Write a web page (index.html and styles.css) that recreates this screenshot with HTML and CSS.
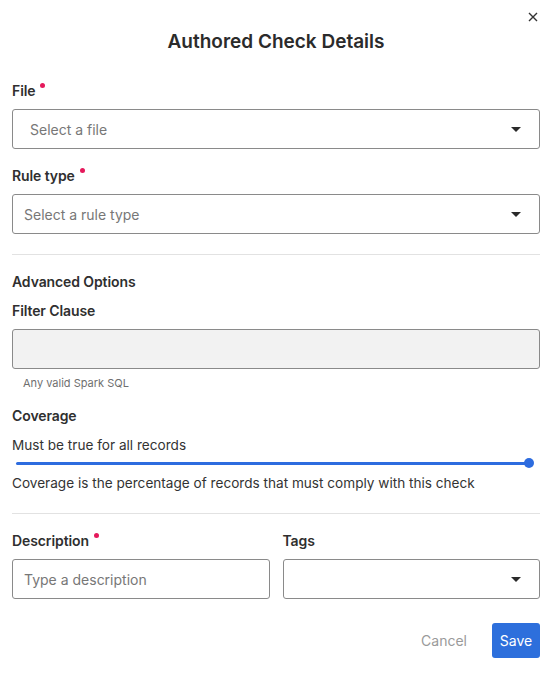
FILE: index.html
```html
<!DOCTYPE html>
<html>
<head>
<meta charset="utf-8">
<link rel="stylesheet" href="styles.css">
</head>
<body>
<div class="dialog">
  <button class="close" aria-label="Close">
    <svg width="10" height="10" viewBox="0 0 10 10"><path d="M1 1L9 9M9 1L1 9" stroke="#333" stroke-width="1.4" fill="none"/></svg>
  </button>
  <h1 class="title">Authored Check Details</h1>

  <div class="field field-first">
    <div class="label">File<span class="req"></span></div>
    <div class="select"><span class="ph ph-file">Select a file</span><span class="caret"></span></div>
  </div>

  <div class="field field-next">
    <div class="label">Rule type<span class="req"></span></div>
    <div class="select"><span class="ph">Select a rule type</span><span class="caret"></span></div>
  </div>

  <hr class="divider divider-1">

  <div class="section-title">Advanced Options</div>
  <div class="field field-filter">
    <div class="label">Filter Clause</div>
    <div class="input disabled"></div>
    <div class="helper">Any valid Spark SQL</div>
  </div>

  <div class="coverage">
    <div class="label">Coverage</div>
    <div class="cov-value">Must be true for all records</div>
    <div class="slider"><div class="track"></div><div class="thumb"></div></div>
    <div class="cov-text">Coverage is the percentage of records that must comply with this check</div>
  </div>

  <hr class="divider divider-2">

  <div class="row">
    <div class="field">
      <div class="label">Description<span class="req"></span></div>
      <div class="input"><span class="ph">Type a description</span></div>
    </div>
    <div class="field">
      <div class="label">Tags</div>
      <div class="select"><span class="ph"></span><span class="caret"></span></div>
    </div>
  </div>

  <div class="actions">
    <button class="btn-cancel">Cancel</button>
    <button class="btn-save">Save</button>
  </div>
</div>
</body>
</html>
```

FILE: styles.css
```css
* { box-sizing: border-box; }
html, body { margin: 0; padding: 0; background: #fff; }
body {
  font-family: Inter, "Noto Sans", "Liberation Sans", sans-serif;
  color: #333;
  font-size: 14px;
}
.dialog {
  position: relative;
  width: 553px;
  padding: 30px 13px 0 12px;
}
.close {
  position: absolute;
  top: 10px;
  right: 14px;
  width: 13px;
  height: 13px;
  padding: 0;
  border: 0;
  background: none;
  display: flex;
  align-items: center;
  justify-content: center;
}
.title {
  margin: 0;
  text-align: center;
  font-size: 19px;
  line-height: 24px;
  font-weight: 600;
  color: #2b2b2b;
}
.field { display: flex; flex-direction: column; }
.field-first { margin-top: 27px; }
.field-next { margin-top: 17px; }
.label {
  font-size: 14px;
  line-height: 20px;
  font-weight: 600;
  color: #2f2f2f;
  position: relative;
  align-self: flex-start;
  letter-spacing: -0.1px;
}
.req {
  display: inline-block;
  width: 5px;
  height: 5px;
  border-radius: 50%;
  background: #e5195b;
  margin-left: 5px;
  vertical-align: 8px;
}
.select, .input {
  margin-top: 8px;
  height: 40px;
  border: 1px solid #8a8a8a;
  border-radius: 3px;
  display: flex;
  align-items: center;
  padding: 0 18px 0 11px;
}
.select { justify-content: space-between; }
.ph { color: #777; font-size: 14px; }
.ph-file { margin-left: 6px; }
.caret {
  width: 0;
  height: 0;
  border-left: 5px solid transparent;
  border-right: 5px solid transparent;
  border-top: 5px solid #2a2a2a;
}
.divider {
  border: 0;
  border-top: 1px solid #e2e2e2;
  margin: 0;
}
.divider-1 { margin-top: 20px; }
.divider-2 { margin-top: 20px; }
.section-title {
  margin-top: 17px;
  font-size: 14px;
  line-height: 20px;
  font-weight: 600;
  color: #2f2f2f;
  letter-spacing: -0.1px;
}
.field-filter { margin-top: 9px; }
.input.disabled { background: #f2f2f2; }
.helper {
  margin-top: 7px;
  padding-left: 11px;
  font-size: 11px;
  line-height: 14px;
  color: #6f6f6f;
}
.coverage { margin-top: 16px; }
.cov-value {
  margin-top: 9px;
  font-size: 13.6px;
  line-height: 20px;
  color: #333;
}
.slider {
  margin-top: 3px;
  height: 10px;
  position: relative;
  display: flex;
  align-items: center;
  padding: 0 11px 0 4px;
}
.track {
  flex: 1;
  height: 3px;
  border-radius: 2px;
  background: #2d6cdf;
}
.thumb {
  position: absolute;
  right: 6px;
  top: 0;
  width: 10px;
  height: 10px;
  border-radius: 50%;
  background: #2d6cdf;
}
.cov-text {
  margin-top: 5px;
  font-size: 13.6px;
  line-height: 20px;
  color: #333;
}
.row {
  margin-top: 17px;
  display: grid;
  grid-template-columns: 1fr 1fr;
  column-gap: 13px;
}
.actions {
  margin-top: 24px;
  display: flex;
  justify-content: flex-end;
  align-items: center;
  gap: 13px;
}
.btn-cancel {
  border: 0;
  background: none;
  font: inherit;
  font-size: 14px;
  color: #9a9a9a;
  padding: 0 12px;
  height: 35px;
}
.btn-save {
  border: 0;
  background: #2d6fdc;
  color: #fff;
  font: inherit;
  font-size: 14px;
  height: 35px;
  width: 48px;
  padding: 0;
  border-radius: 3px;
}
```
